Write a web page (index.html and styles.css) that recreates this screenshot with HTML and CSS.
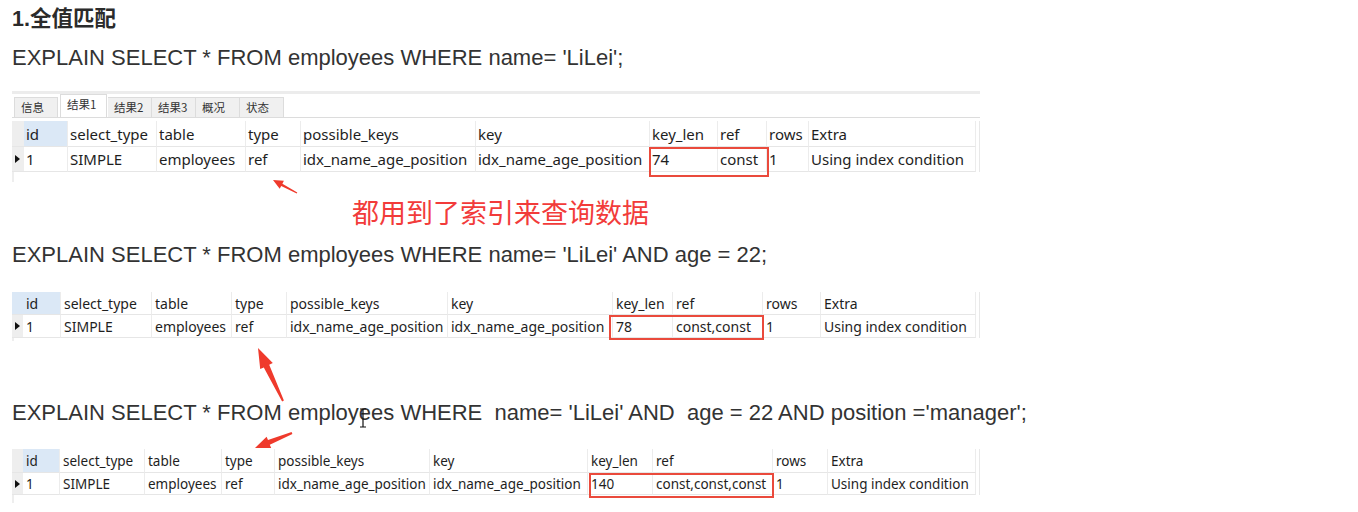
FILE: index.html
```html
<!DOCTYPE html>
<html lang="zh-CN">
<head>
<meta charset="utf-8">
<title>全值匹配</title>
<link rel="stylesheet" href="styles.css">
</head>
<body>
<div class="page">
  <h3 class="title">1.全值匹配</h3>
  <p class="sql sql1">EXPLAIN SELECT * FROM employees WHERE name= 'LiLei';</p>

  <div class="result t1">
    <div class="topbar"></div>
    <div class="tabs">
      <span class="tab">信息</span>
      <span class="tab active">结果1</span>
      <span class="tab">结果2</span>
      <span class="tab">结果3</span>
      <span class="tab">概况</span>
      <span class="tab">状态</span>
    </div>
    <div class="grid">
      <div class="c corner"></div><div class="c h idh">id</div><div class="c h">select_type</div><div class="c h">table</div><div class="c h">type</div><div class="c h">possible_keys</div><div class="c h">key</div><div class="c h">key_len</div><div class="c h">ref</div><div class="c h">rows</div><div class="c h">Extra</div>
      <div class="c ind"><span class="tri"></span></div><div class="c d">1</div><div class="c d">SIMPLE</div><div class="c d">employees</div><div class="c d">ref</div><div class="c d">idx_name_age_position</div><div class="c d">idx_name_age_position</div><div class="c d">74</div><div class="c d">const</div><div class="c d">1</div><div class="c d">Using index condition</div>
      <div class="redbox"></div>
    </div>
    <div class="tail"></div>
  </div>

  <p class="note">都用到了索引来查询数据</p>

  <p class="sql sql2">EXPLAIN SELECT * FROM employees WHERE name= 'LiLei' AND age = 22;</p>

  <div class="result t2">
    <div class="grid">
      <div class="c corner"></div><div class="c h idh">id</div><div class="c h">select_type</div><div class="c h">table</div><div class="c h">type</div><div class="c h">possible_keys</div><div class="c h">key</div><div class="c h">key_len</div><div class="c h">ref</div><div class="c h">rows</div><div class="c h">Extra</div>
      <div class="c ind"><span class="tri"></span></div><div class="c d">1</div><div class="c d">SIMPLE</div><div class="c d">employees</div><div class="c d">ref</div><div class="c d">idx_name_age_position</div><div class="c d">idx_name_age_position</div><div class="c d">78</div><div class="c d">const,const</div><div class="c d">1</div><div class="c d">Using index condition</div>
      <div class="redbox"></div>
    </div>
    <div class="tail"></div>
  </div>

  <p class="sql sql3">EXPLAIN SELECT * FROM employees WHERE &nbsp;name= 'LiLei' AND &nbsp;age = 22 AND position ='manager';</p>

  <div class="result t3">
    <div class="grid">
      <div class="c corner"></div><div class="c h idh">id</div><div class="c h">select_type</div><div class="c h">table</div><div class="c h">type</div><div class="c h">possible_keys</div><div class="c h">key</div><div class="c h">key_len</div><div class="c h">ref</div><div class="c h">rows</div><div class="c h">Extra</div>
      <div class="c ind"><span class="tri"></span></div><div class="c d">1</div><div class="c d">SIMPLE</div><div class="c d">employees</div><div class="c d">ref</div><div class="c d">idx_name_age_position</div><div class="c d">idx_name_age_position</div><div class="c d">140</div><div class="c d">const,const,const</div><div class="c d">1</div><div class="c d">Using index condition</div>
      <div class="redbox"></div>
    </div>
    <div class="tail"></div>
  </div>
</div>

<svg class="annot" width="1358" height="512" viewBox="0 0 1358 512" aria-hidden="true">
  <polygon class="arrow" points="297.3,192.4 282.4,183.7 283.9,180.8 273,180 279.7,188.8 281.2,185.9 296.7,193.6"/>
  <polygon class="arrow" points="283.9,400.6 269.2,364.8 272.8,363.1 258,348 260.2,369.1 263.8,367.4 282.1,401.4"/>
  <polygon class="arrow" points="291.6,432.1 268.0,440.1 266.6,436.8 255,448 271.2,447.9 269.8,444.7 292.4,433.9"/>
  <g class="ibeam">
    <path d="M360 409h6M363 409v18M360 427h6" />
  </g>
</svg>
</body>
</html>
```

FILE: styles.css
```css
html, body {
  margin: 0;
  padding: 0;
  background: #ffffff;
}

body {
  position: relative;
  width: 1358px;
  height: 512px;
  overflow: hidden;
  font-family: "Liberation Sans", Arial, "Noto Sans CJK SC", sans-serif;
  color: #333333;
}

.page {
  padding: 6px 0 0 12px;
}

.title {
  margin: 0;
  font-family: "Liberation Sans", "Noto Sans CJK SC", sans-serif;
  font-size: 21.5px;
  font-weight: 700;
  line-height: 26px;
  color: #2b2b2b;
}

.sql {
  margin: 0;
  font-size: 22px;
  line-height: 26px;
  color: #333333;
  white-space: nowrap;
}

.sql1 { margin-top: 13px; }
.sql2 { margin-top: 12px; }
.sql3 { margin-top: 59px; }

/* result panels */
.result {
  width: 968px;
  font-family: "Noto Sans", "Noto Sans CJK SC", sans-serif;
  color: #1e1e1e;
}

.t1 { margin-top: 20px; }
.t2 { margin-top: 24px; }
.t3 { margin-top: 23px; }

.topbar {
  height: 3px;
  background: #ececec;
}

.tabs {
  display: flex;
  height: 21px;
  margin-top: 2px;
  padding-left: 2px;
  border-bottom: 1px solid #dcdcdc;
  align-items: flex-end;
}

.tab {
  width: 44px;
  height: 20px;
  box-sizing: border-box;
  font-family: "Noto Sans CJK SC", sans-serif;
  font-size: 11.5px;
  line-height: 19px;
  padding-left: 6px;
  color: #333;
  background: #f0f0f0;
  border: 1px solid #dcdcdc;
  border-bottom: none;
  margin-right: 0;
}

.tab + .tab { border-left: none; }

.tab.active {
  width: 47px;
  height: 23px;
  margin: 0 1px 0 2px;
  background: #ffffff;
  border-left: 1px solid #dcdcdc;
}

.grid {
  position: relative;
  display: grid;
  border-right: 1px solid #e8e8e8;
}

.t1 .grid {
  margin-top: 3px;
  grid-template-columns: 12px 44px 89px 89px 55px 175px 174px 68px 49px 42px 167px;
  grid-template-rows: 26px 25px;
  font-size: 15px;
}

.t2 .grid {
  grid-template-columns: 11px 38px 91px 80px 55px 161px 165px 60px 90px 58px 155px;
  grid-template-rows: 23px 23px;
  font-size: 14px;
}

.t3 .grid {
  grid-template-columns: 11px 37px 85px 77px 53px 155px 158px 65px 120px 55px 148px;
  grid-template-rows: 24px 22px;
  font-size: 13.5px;
}

.c {
  box-sizing: border-box;
  padding-left: 2px;
  white-space: nowrap;
  overflow: hidden;
  display: flex;
  align-items: center;
  border-right: 1px solid #ececec;
  border-bottom: 1px solid #e6e6e6;
}

.t3 .c, .t2 .c { padding-left: 3px; }

.corner {
  background: #eeeeee;
  border-right: none;
}

.t2 .corner { background: #dbe8f6; }

.idh { background: #dbe8f6; }

.c.ind {
  background: #eeeeee;
  padding-left: 3px;
  border-right: none;
}

.tri {
  width: 0;
  height: 0;
  border-left: 5px solid #111;
  border-top: 4.5px solid transparent;
  border-bottom: 4.5px solid transparent;
}

.tail {
  width: 2px;
  height: 10px;
  background: #eeeeee;
}

.t2 .tail { height: 3px; }
.t3 .tail { height: 8px; }

.redbox {
  position: absolute;
  box-sizing: border-box;
  border: 2px solid #ea4a3c;
}

.t1 .redbox { left: 637px; top: 26px; width: 120px; height: 30px; }
.t2 .redbox { left: 597px; top: 23px; width: 155px; height: 25px; }
.t3 .redbox { left: 577px; top: 24px; width: 185px; height: 25px; }

.note {
  margin: 12px 0 0 340px;
  font-family: "Noto Sans CJK SC", sans-serif;
  font-size: 27px;
  line-height: 36px;
  color: #f23b3a;
}

.annot {
  position: absolute;
  left: 0;
  top: 0;
  pointer-events: none;
}

.arrow { fill: #ef3a2c; }

.ibeam path {
  fill: none;
  stroke: #111;
  stroke-width: 1.2;
}
```
